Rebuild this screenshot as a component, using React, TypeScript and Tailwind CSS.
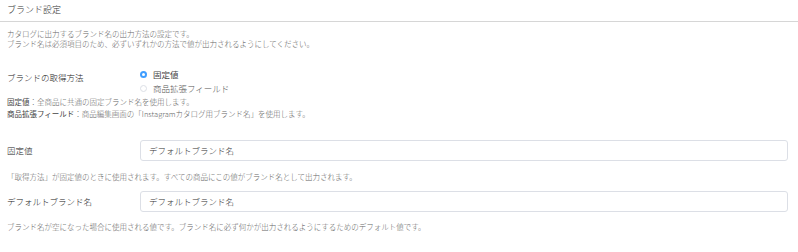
export default function App() {
    return (
        <div className="h-[252px] w-[798px] bg-white font-['Noto_Sans_CJK_JP',sans-serif] text-[#333]">
            {/* Header */}
            <div className="flex h-[22px] items-center border-b border-[#d6d6d6] px-[7px] pb-[1px] text-[9px] font-light text-[#333]">
                ブランド設定
            </div>

            <div className="px-[7px]">
                {/* Description */}
                <div className="mt-[7px] text-[7.5px] font-light leading-[10px] text-[#666]">
                    <p>カタログに出力するブランド名の出力方法の設定です。</p>
                    <p>ブランド名は必須項目のため、必ずいずれかの方法で値が出力されるようにしてください。</p>
                </div>

                {/* Source selection */}
                <div className="mt-[18px] flex">
                    <div className="mt-[3px] w-[133px] text-[8.5px] font-light leading-[14px] text-[#222]">
                        ブランドの取得方法
                    </div>
                    <div className="flex flex-col">
                        <label className="flex h-[14px] items-center gap-[6px] text-[8.5px] text-[#444]">
                            <span className="flex h-[7px] w-[7px] items-center justify-center rounded-full bg-[#409eff]">
                                <span className="h-[3px] w-[3px] rounded-full bg-white" />
                            </span>
                            固定値
                        </label>
                        <label className="flex h-[14px] items-center gap-[6px] text-[8.5px] font-light text-[#555]">
                            <span className="h-[7px] w-[7px] rounded-full border border-[#dcdfe6] bg-white" />
                            商品拡張フィールド
                        </label>
                    </div>
                </div>

                {/* Notes */}
                <div className="mt-[1px] text-[7.5px] font-light leading-[12px] text-[#666]">
                    <p>
                        <span className="font-normal text-[#444]">固定値</span>：全商品に共通の固定ブランド名を使用します。
                    </p>
                    <p>
                        <span className="font-normal text-[#444]">商品拡張フィールド</span>：商品編集画面の「Instagramカタログ用ブランド名」を使用します。
                    </p>
                </div>

                {/* Fixed value */}
                <div className="mt-[20px] flex items-center">
                    <div className="w-[133px] text-[8.5px] font-light text-[#222]">固定値</div>
                    <div className="flex h-[21px] w-[648px] items-center rounded-[3px] border border-[#dcdfe6] px-[8px] text-[8.5px] font-light text-[#333]">
                        デフォルトブランド名
                    </div>
                </div>
                <p className="mt-[10px] text-[7.5px] font-light leading-[12px] text-[#666]">
                    「取得方法」が固定値のときに使用されます。すべての商品にこの値がブランド名として出力されます。
                </p>

                {/* Default value */}
                <div className="mt-[8px] flex items-center">
                    <div className="w-[133px] text-[8.5px] font-light text-[#222]">デフォルトブランド名</div>
                    <div className="flex h-[21px] w-[648px] items-center rounded-[3px] border border-[#dcdfe6] px-[8px] text-[8.5px] font-light text-[#333]">
                        デフォルトブランド名
                    </div>
                </div>
                <p className="mt-[9px] text-[7.5px] font-light leading-[12px] text-[#666]">
                    ブランド名が空になった場合に使用される値です。ブランド名に必ず何かが出力されるようにするためのデフォルト値です。
                </p>
            </div>
        </div>
    )
}
